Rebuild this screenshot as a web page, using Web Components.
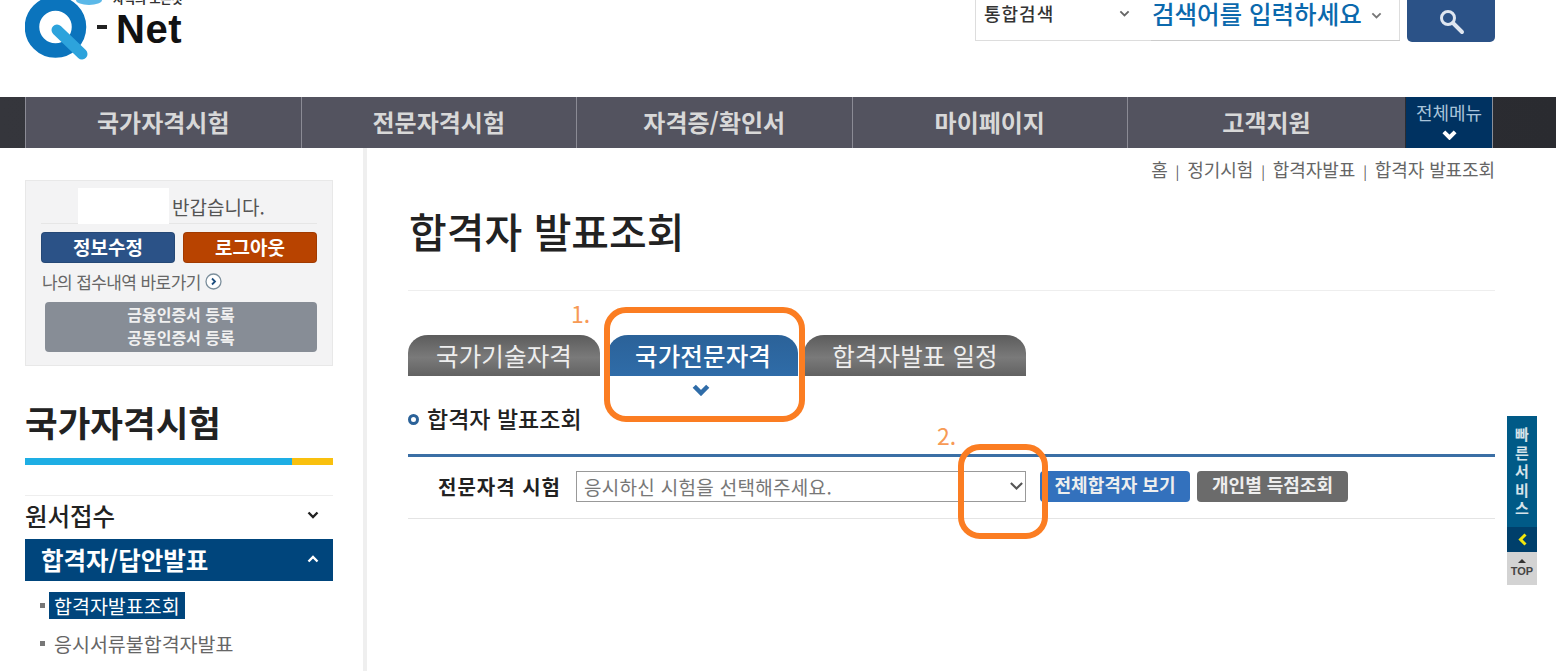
<!DOCTYPE html>
<html lang="ko">
<head>
<meta charset="utf-8">
<title>Q-Net 합격자 발표조회</title>
<style>
    html, body { margin: 0; height: 671px; overflow: hidden; background: #fff; }
    body { font-family: "Noto Sans CJK KR", "Noto Sans", sans-serif; position: relative; }
    .columns { display: flex; align-items: stretch; height: 523px; }
</style>
</head>
<body>
<q-header></q-header>
<q-nav>
    <q-nav-item>국가자격시험</q-nav-item>
    <q-nav-item>전문자격시험</q-nav-item>
    <q-nav-item>자격증/확인서</q-nav-item>
    <q-nav-item>마이페이지</q-nav-item>
    <q-nav-item>고객지원</q-nav-item>
</q-nav>
<div class="columns">
    <q-sidebar></q-sidebar>
    <q-main></q-main>
</div>
<q-quick></q-quick>
<q-mark num="1." style="left:604px;top:307px;width:201px;height:115px" label-x="-33" label-y="6"></q-mark>
<q-mark num="2." style="left:958px;top:444px;width:90px;height:95px" label-x="-21" label-y="-9"></q-mark>

<script>
const chevron = (color, w = 12, sw = 2, up = false) => /*html*/ `
    <svg width="${w}" height="${w * 0.67}" viewBox="0 0 12 8" fill="none" stroke="${color}" stroke-width="${sw}" style="display:block">
        <path d="${up ? 'M1.5 6.5 6 2l4.5 4.5' : 'M1.5 1.5 6 6l4.5-4.5'}"/>
    </svg>`

class QHeader extends HTMLElement {
    constructor() {
        super()
        this.attachShadow({ mode: 'open' }).innerHTML = /*html*/ `
            <style>
                :host { display: flex; height: 97px; overflow: hidden; position: relative; padding: 0 61px 0 25px; box-sizing: border-box; }
                .logo { display: flex; width: 160px; height: 62px; position: relative; flex: none; }
                .logo svg { display: block; }
                .slogan { position: absolute; left: 88px; top: -8px; font-size: 12px; line-height: 14px; font-weight: 700; color: #333; white-space: nowrap; }
                .dash { position: absolute; left: 72px; top: 25px; width: 10px; height: 4px; background: #222; }
                .name { position: absolute; left: 91px; top: 13px; font: 700 40px/32px "Liberation Sans", sans-serif; letter-spacing: .5px; color: #111; white-space: nowrap; }
                .search { margin-left: auto; display: flex; height: 41px; }
                .kind { width: 176px; box-sizing: border-box; border: 1px solid #ddd; border-top: 0; border-right: 0; display: flex; justify-content: space-between; padding: 0 21px 0 8px; align-items: flex-start; }
                .kind span { font-size: 18px; letter-spacing: 1px; line-height: 27px; font-weight: 500; color: #333; }
                .kind svg { margin-top: 10px; }
                .word { width: 249px; box-sizing: border-box; border-right: 1px solid #ddd; box-shadow: 0 1px 0 #ccc; height: 40px; display: flex; align-items: flex-start; gap: 9px; padding-left: 1px; }
                .word span { font-size: 24.5px; font-weight: 500; line-height: 28px; color: #0b69ad; white-space: nowrap; }
                .word svg { margin-top: 12px; }
                button { width: 88px; height: 42px; margin-left: 7px; border: 0; background: #2b5287; border-radius: 0 0 5px 5px; padding: 0; }
                button svg { display: block; margin: 1px auto 0; }
            </style>
            <div class="logo">
                <svg width="70" height="62" viewBox="0 0 70 62">
                    <circle cx="30.500" cy="27" r="23.500" fill="none" stroke="#0b74bd" stroke-width="14.500"/>
                    <path d="M32 30 57 54" stroke="#2da3dc" stroke-width="11" stroke-linecap="round"/>
                </svg>
                <svg width="30" height="8" viewBox="0 0 30 8" style="position:absolute;left:48px;top:0"><ellipse cx="16" cy="0" rx="13" ry="5" fill="#5bb8e8"/></svg>
                <span class="slogan">자격의 모든것</span>
                <i class="dash"></i>
                <span class="name">Net</span>
            </div>
            <div class="search">
                <div class="kind"><span>통합검색</span>${chevron('#666', 11, 2)}</div>
                <div class="word"><span>검색어를 입력하세요</span>${chevron('#777', 11, 2)}</div>
                <button aria-label="검색">
                    <svg width="30" height="30" viewBox="0 0 30 30" fill="none" stroke="#dfe6f0">
                        <circle cx="12" cy="11" r="6.5" stroke-width="3"/>
                        <path d="m17 16 9 9" stroke-width="4" stroke-linecap="round"/>
                    </svg>
                </button>
            </div>`
    }
}

class QNav extends HTMLElement {
    constructor() {
        super()
        this.attachShadow({ mode: 'open' }).innerHTML = /*html*/ `
            <style>
                :host { display: flex; height: 51px; padding-left: 25px; background: linear-gradient(90deg, #35363c, #2a2b30); }
                .items { display: flex; width: 1380px; background: #53535f; }
                ::slotted(q-nav-item) { flex: 0 0 275.5px; }
                ::slotted(q-nav-item:last-child) { flex: 1; }
                .all { width: 87px; margin-left: 1px; background: #003261; border-right: 1px solid #8a8f99; color: #a9c4da; text-align: center; font-size: 18px; line-height: 24px; padding-top: 3px; box-sizing: border-box; white-space: nowrap; }
                .all svg { margin: 6px auto 0; }
            </style>
            <div class="items"><slot></slot></div>
            <div class="all">전체메뉴${chevron('#fff', 15, 3.2)}</div>`
    }
}

class QNavItem extends HTMLElement {
    constructor() {
        super()
        this.attachShadow({ mode: 'open' }).innerHTML = /*html*/ `
            <style>
                :host { display: flex; align-items: center; justify-content: center; box-sizing: border-box; border-left: 1px solid #8b8b95; color: #d8d8d8; font-size: 24px; font-weight: 700; padding-bottom: 3px; white-space: nowrap; }
            </style>
            <slot></slot>`
    }
}

class QLogin extends HTMLElement {
    constructor() {
        super()
        this.attachShadow({ mode: 'open' }).innerHTML = /*html*/ `
            <style>
                :host { display: block; width: 308px; height: 186px; box-sizing: border-box; background: #f3f3f4; border: 1px solid #e8e8e8; padding: 7px 15px 0; }
                .hello { display: flex; height: 35px; padding-left: 37px; border-bottom: 1px solid #e6e6e6; font-size: 19px; line-height: 37px; color: #555; white-space: nowrap; }
                .hello i { display: block; width: 91px; height: 36px; background: #fff; margin-right: 3px; flex: none; }
                .btns { display: grid; grid-template-columns: 134px 134px; gap: 8px; margin-top: 8px; }
                .btns div { height: 31px; border-radius: 4px; color: #fff; font-size: 19px; font-weight: 700; line-height: 27px; text-align: center; box-sizing: border-box; border: 1px solid rgba(0,0,0,.12); }
                .edit { background: #2b5287; }
                .out { background: #b84300; }
                .link { display: flex; align-items: center; gap: 4px; height: 37px; padding: 0 0 2px 1px; font-size: 17px; letter-spacing: -.6px; color: #666; white-space: nowrap; }
                .link svg { flex: none; }
                .cert { margin-left: 4px; width: 272px; height: 50px; background: #878d96; border-radius: 4px; color: #f0f0f0; font-size: 16px; font-weight: 700; line-height: 23px; text-align: center; padding-top: 1px; box-sizing: border-box; }
            </style>
            <div class="hello"><i></i>반갑습니다.</div>
            <div class="btns"><div class="edit">정보수정</div><div class="out">로그아웃</div></div>
            <div class="link">나의 접수내역 바로가기
                <svg width="17" height="17" viewBox="0 0 17 17" fill="none"><circle cx="8.500" cy="8.500" r="7.500" fill="#fff" stroke="#7c8f9c" stroke-width="1.300"/><path d="m7 5.500 3 3-3 3" stroke="#1f4f7f" stroke-width="1.800"/></svg>
            </div>
            <div class="cert">금융인증서 등록<br>공동인증서 등록</div>`
    }
}

class QSidebar extends HTMLElement {
    constructor() {
        super()
        this.attachShadow({ mode: 'open' }).innerHTML = /*html*/ `
            <style>
                :host { display: block; width: 367px; flex: none; box-sizing: border-box; padding: 32px 30px 0 25px; border-right: 4px solid #efefef; overflow: hidden; }
                h2 { margin: 33px 0 0; font-size: 35.5px; line-height: 46px; font-weight: 700; color: #222; white-space: nowrap; }
                .bar { display: flex; height: 7px; margin: 13px 0 30px; background: #1eaee4; }
                .bar i { display: block; width: 41px; margin-left: auto; background: #f9c00e; }
                .row { display: flex; justify-content: space-between; align-items: center; height: 43px; box-sizing: border-box; padding-bottom: 3px; font-size: 24.5px; font-weight: 500; color: #222; border-top: 1px solid #eee; padding-right: 14px; margin-bottom: 1px; }
                .row.on { height: 42px; background: #00457c; color: #fff; font-weight: 700; padding-left: 16px; padding-bottom: 2px; border: 0; margin: 0; }
                ul { list-style: none; margin: 11px 0 0; padding: 0 0 0 15px; }
                li { display: flex; align-items: center; height: 27px; margin-bottom: 11px; font-size: 19.5px; color: #666; white-space: nowrap; }
                li::before { content: ""; width: 5px; height: 5px; background: #777; margin-right: 4px; flex: none; }
                li b { font-weight: 400; background: #00457c; color: #fff; line-height: 27px; padding: 0 5px; }
                li span { padding-left: 5px; }
            </style>
            <q-login></q-login>
            <h2>국가자격시험</h2>
            <div class="bar"><i></i></div>
            <div class="row"><span>원서접수</span>${chevron('#222', 12, 2.4)}</div>
            <div class="row on"><span>합격자/답안발표</span>${chevron('#fff', 12, 2.4, true)}</div>
            <ul>
                <li><b>합격자발표조회</b></li>
                <li><span>응시서류불합격자발표</span></li>
            </ul>`
    }
}

class QTab extends HTMLElement {
    constructor() {
        super()
        this.attachShadow({ mode: 'open' }).innerHTML = /*html*/ `
            <style>
                :host { display: block; height: 41px; box-sizing: border-box; border-radius: 20px 20px 0 0 / 18px 18px 0 0; background: linear-gradient(#5c5c5c, #7a7a7a 55%, #626262); color: #eee; font-size: 24.5px; letter-spacing: .1px; line-height: 41px; text-align: center; white-space: nowrap; position: relative; }
                :host([active]) { background: linear-gradient(#2b6299, #2f6ca8); color: #fff; font-weight: 500; }
                svg { display: none; position: absolute; left: 50%; top: 49px; margin-left: -11px; }
                :host([active]) svg { display: block; }
            </style>
            <slot></slot>
            <svg width="18" height="12" viewBox="0 0 12 8" fill="none" stroke="#2f6ca8" stroke-width="3"><path d="M1.500 1.500 6 6l4.500-4.500"/></svg>`
    }
}

class QMain extends HTMLElement {
    constructor() {
        super()
        this.attachShadow({ mode: 'open' }).innerHTML = /*html*/ `
            <style>
                :host { display: block; width: 1128px; flex: none; box-sizing: border-box; padding: 7px 0 0 41px; }
                .crumb { display: flex; justify-content: flex-end; align-items: center; gap: 8px; height: 28px; font-size: 18px; line-height: 28px; letter-spacing: -.1px; color: #666; white-space: nowrap; }
                .crumb i { font-style: normal; font-size: 14px; color: #555; padding-top: 3px; }
                h1 { margin: 18px 0 0; height: 89px; font-size: 41px; line-height: 58px; font-weight: 500; color: #222; border-bottom: 1px solid #eee; padding-left: 1px; }
                .tabs { display: flex; margin-top: 44px; }
                .tabs q-tab:nth-child(1) { width: 192px; }
                .tabs q-tab:nth-child(2) { width: 190px; margin-left: 8px; }
                .tabs q-tab:nth-child(3) { width: 222px; margin-left: 6px; }
                h3 { display: flex; align-items: center; gap: 8px; margin: 25px 0 0; height: 34px; font-size: 23px; line-height: 34px; font-weight: 500; color: #222; }
                h3::before { content: ""; width: 5px; height: 5px; border: 3px solid #2b6299; border-radius: 50%; margin-top: 2px; }
                .form { display: flex; align-items: center; height: 59px; padding-bottom: 2px; margin-top: 19px; border-top: 3px solid #3b6fa5; border-bottom: 1px solid #e4e4e4; padding-left: 30px; }
                label { font-size: 20px; font-weight: 700; color: #222; letter-spacing: 1px; width: 138px; flex: none; white-space: nowrap; }
                .select { width: 450px; height: 31px; box-sizing: border-box; border: 1px solid #999; display: flex; justify-content: space-between; align-items: center; padding: 0 1px 0 7px; font-size: 19px; color: #777; letter-spacing: .3px; white-space: nowrap; }
                .btn { height: 31px; width: 150px; border-radius: 4px; color: #eee; font-size: 18px; font-weight: 700; line-height: 26px; text-align: center; flex: none; white-space: nowrap; }
                .blue { background: #3371bd; margin-left: 14px; }
                .grey { background: #6b6b6b; margin-left: 7px; width: 151px; }
            </style>
            <nav class="crumb"><span>홈</span><i>|</i><span>정기시험</span><i>|</i><span>합격자발표</span><i>|</i><span>합격자 발표조회</span></nav>
            <h1>합격자 발표조회</h1>
            <div class="tabs">
                <q-tab>국가기술자격</q-tab>
                <q-tab active>국가전문자격</q-tab>
                <q-tab>합격자발표 일정</q-tab>
            </div>
            <h3>합격자 발표조회</h3>
            <div class="form">
                <label>전문자격 시험</label>
                <div class="select"><span>응시하신 시험을 선택해주세요.</span>${chevron('#555', 15, 1.7)}</div>
                <div class="btn blue">전체합격자 보기</div>
                <div class="btn grey">개인별 득점조회</div>
            </div>`
    }
}

class QQuick extends HTMLElement {
    constructor() {
        super()
        this.attachShadow({ mode: 'open' }).innerHTML = /*html*/ `
            <style>
                :host { display: block; position: absolute; left: 1507px; top: 416px; width: 30px; }
                .label { height: 111px; background: #005a87; color: #d5e3ea; font-size: 15px; font-weight: 700; line-height: 18.500px; text-align: center; padding-top: 9px; box-sizing: border-box; }
                .arrow { height: 25px; background: #003f6b; display: flex; align-items: center; justify-content: center; }
                .top { height: 33px; background: #d3d3d3; color: #444; font: 700 11px/12px "Liberation Sans", sans-serif; text-align: center; box-sizing: border-box; padding-top: 7px; }
                .top::before { content: ""; display: block; width: 0; margin: 0 auto 2px; border: 4px solid transparent; border-top: 0; border-bottom: 4px solid #333; }
            </style>
            <div class="label">빠<br>른<br>서<br>비<br>스</div>
            <div class="arrow"><svg width="9" height="13" viewBox="0 0 9 13" fill="none" stroke="#f2e60c" stroke-width="3"><path d="M7.500 1.500 2.500 6.500l5 5"/></svg></div>
            <div class="top">TOP</div>`
    }
}

// orange hand drawn boxes that lie over the screenshot
class QMark extends HTMLElement {
    constructor() {
        super()
        const x = this.getAttribute('label-x')
        const y = this.getAttribute('label-y')
        this.attachShadow({ mode: 'open' }).innerHTML = /*html*/ `
            <style>
                :host { display: block; position: absolute; box-sizing: border-box; border: 6px solid #fb7d22; border-radius: 22px; }
                span { position: absolute; left: ${x - 6}px; top: ${y - 6}px; transform: translateY(-50%); font-size: 23px; color: #f79a55; white-space: nowrap; }
            </style>
            <span>${this.getAttribute('num')}</span>`
    }
}

customElements.define('q-header', QHeader)
customElements.define('q-nav', QNav)
customElements.define('q-nav-item', QNavItem)
customElements.define('q-login', QLogin)
customElements.define('q-sidebar', QSidebar)
customElements.define('q-tab', QTab)
customElements.define('q-main', QMain)
customElements.define('q-quick', QQuick)
customElements.define('q-mark', QMark)
</script>
</body>
</html>
